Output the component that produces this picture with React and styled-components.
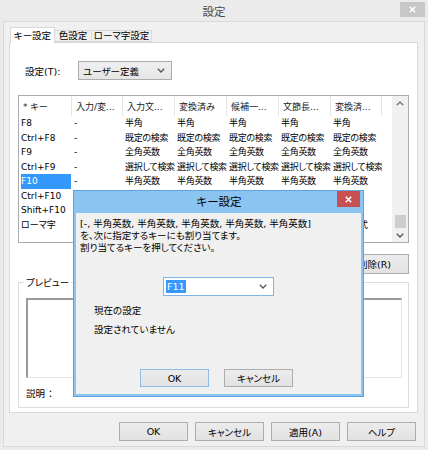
import React from 'react';
import styled, { createGlobalStyle } from 'styled-components';

const Global = createGlobalStyle`
  html, body { margin: 0; padding: 0; background: #ebebeb; }
  body {
    font-family: "DejaVu Sans", "Noto Sans CJK JP", sans-serif;
    font-size: 9.5px;
    font-feature-settings: "palt";
    color: #000;
  }
  * { box-sizing: border-box; }
`;

const Window = styled.div`
  position: relative;
  width: 428px;
  height: 450px;
  background: #ebebeb;
  display: flex;
  flex-direction: column;
  overflow: hidden;
`;

const TitleBar = styled.div`
  height: 21px;
  flex: none;
  display: flex;
  align-items: flex-start;
`;

const TitleText = styled.div`
  flex: 1;
  text-align: center;
  padding-left: ${p => p.$pad}px;
  line-height: ${p => p.$lh}px;
  font-size: 11.5px;
  color: ${p => p.$color};
`;

const CloseBtn = styled.div`
  width: ${p => p.$w}px;
  height: ${p => p.$h}px;
  margin: ${p => p.$m};
  background: ${p => p.$bg};
  display: flex;
  align-items: center;
  justify-content: center;
  flex: none;
`;

const Client = styled.div`
  flex: 1;
  margin: 0 3px 3px;
  border: 1px solid #d9d9d9;
  background: #f0f0f0;
  padding: 5px 6px 0 5px;
  display: flex;
  flex-direction: column;
`;

const TabStrip = styled.div`
  height: 15px;
  flex: none;
  display: flex;
  align-items: flex-end;
  padding-left: 1px;
`;

const Tab = styled.div`
  width: ${p => p.$w}px;
  height: ${p => (p.$active ? 16 : 12)}px;
  margin-bottom: ${p => (p.$active ? -1 : 0)}px;
  margin-left: ${p => (p.$first ? 0 : -1)}px;
  border: 1px solid #d9d9d9;
  border-bottom: ${p => (p.$active ? 'none' : '1px solid #d9d9d9')};
  background: ${p => (p.$active ? '#ffffff' : '#f0f0f0')};
  position: relative;
  z-index: ${p => (p.$active ? 2 : 1)};
  display: flex;
  align-items: center;
  justify-content: center;
  white-space: nowrap;
  line-height: 1;
`;

const Pane = styled.div`
  flex: 1;
  background: #ffffff;
  border: 1px solid #d9d9d9;
  display: flex;
  flex-direction: column;
`;

const SettingRow = styled.div`
  margin-top: 18px;
  padding-left: 15px;
  height: 19px;
  display: flex;
  align-items: center;
`;

const FieldLabel = styled.span`
  width: 53px;
  flex: none;
`;

const Combo = styled.div`
  width: ${p => p.$w}px;
  height: 19px;
  flex: none;
  display: flex;
  align-items: center;
  padding: 0 6px 0 ${p => p.$pl}px;
  border: 1px solid ${p => (p.$focus ? '#7eb4ea' : '#acacac')};
  background: ${p => (p.$focus ? '#ffffff' : 'linear-gradient(#f0f0f0, #e5e5e5)')};
`;

const ComboText = styled.span`
  flex: 1;
  white-space: nowrap;
`;

const Selected = styled.span`
  background: #3399ff;
  color: #ffffff;
  padding: 1px 1px;
`;

const ListView = styled.div`
  margin: 15px 8px 0;
  height: 148px;
  flex: none;
  border: 1px solid #a9abb0;
  background: #ffffff;
  display: flex;
  font-size: 9px;
`;

const ListMain = styled.div`
  flex: 1;
  min-width: 0;
  overflow: hidden;
  display: flex;
  flex-direction: column;
`;

const HeaderRow = styled.div`
  height: 20px;
  flex: none;
  display: flex;
`;

const HeaderCell = styled.div`
  width: ${p => p.$w}px;
  flex: none;
  border-right: 1px solid #e5e5e5;
  padding-left: 4px;
  display: flex;
  align-items: center;
  white-space: nowrap;
  overflow: hidden;
  color: #1a1a1a;
`;

const Row = styled.div`
  height: 14.5px;
  flex: none;
  display: flex;
`;

const Cell = styled.div`
  width: ${p => p.$w}px;
  flex: none;
  padding-left: 2px;
  line-height: 14.5px;
  letter-spacing: -0.3px;
  white-space: nowrap;
  overflow: hidden;
`;

const ItemLabel = styled.span`
  display: block;
  margin-right: 1px;
  letter-spacing: 0;
  background: ${p => (p.$selected ? '#3399ff' : 'transparent')};
  color: ${p => (p.$selected ? '#ffffff' : '#000000')};
`;

const ScrollBar = styled.div`
  width: 16px;
  flex: none;
  background: #f0f0f0;
  display: flex;
  flex-direction: column;
`;

const ScrollArrow = styled.div`
  height: 14px;
  flex: none;
  display: flex;
  align-items: center;
  justify-content: center;
`;

const ScrollTrack = styled.div`
  flex: 1;
  display: flex;
  flex-direction: column;
  justify-content: flex-end;
`;

const Thumb = styled.div`
  height: 13px;
  margin: 0 2px 0 3px;
  background: #cdcdcd;
`;

const ActionRow = styled.div`
  margin-top: 11px;
  padding-right: 8px;
  display: flex;
  justify-content: flex-end;
`;

const Button = styled.div`
  width: ${p => p.$w}px;
  height: ${p => p.$h}px;
  flex: none;
  border: 1px solid ${p => (p.$default ? '#8fbbe6' : '#adadad')};
  background: linear-gradient(#ececec, #e2e2e2);
  display: flex;
  align-items: center;
  justify-content: center;
  white-space: nowrap;
`;

const GroupBox = styled.div`
  margin: 8px 8px 0;
  height: 126px;
  flex: none;
  border: 1px solid #dcdcdc;
  padding: 0 6px 0 7px;
  display: flex;
  flex-direction: column;
`;

const Legend = styled.span`
  align-self: flex-start;
  margin: -7px 0 0 -2px;
  padding: 0 2px;
  line-height: 13px;
  height: 13px;
  background: #ffffff;
`;

const PreviewBox = styled.div`
  margin-top: 9px;
  height: 80px;
  flex: none;
  border-style: solid;
  border-width: 2px 1px 1px 2px;
  border-color: #9a9a9a #e3e3e3 #e3e3e3 #9a9a9a;
`;

const Note = styled.div`
  margin-top: 9px;
  line-height: 13px;
`;

const BottomBar = styled.div`
  margin: 9px 0 5px;
  padding-right: 2px;
  height: 19px;
  flex: none;
  display: flex;
  justify-content: flex-end;
  gap: 7px;
`;

/* ---- modal dialog ---- */
const Dialog = styled.div`
  position: absolute;
  left: 73px;
  top: 190px;
  width: 291px;
  height: 207px;
  background: #8cc4f1;
  border: 1px solid #5aa2e0;
  padding: 0 2px 2px;
  display: flex;
  flex-direction: column;
  z-index: 10;
`;

const DialogTitle = styled.div`
  height: 22px;
  flex: none;
  display: flex;
  align-items: flex-start;
`;

const DialogBody = styled.div`
  flex: 1;
  background: #f0f0f0;
  padding: 5px 4px 0;
  display: flex;
  flex-direction: column;
`;

const Message = styled.div`
  line-height: 12px;
  white-space: nowrap;
`;

const DialogCombo = styled.div`
  margin: 23px 0 0 83px;
  display: flex;
`;

const InfoText = styled.div`
  margin: ${p => p.$mt}px 0 0 14px;
  line-height: 12px;
`;

const DialogButtons = styled.div`
  margin-top: 33px;
  display: flex;
  justify-content: center;
  gap: 15px;
  padding-right: 4px;
`;

const Chevron = () => (
  <svg width="8" height="5" viewBox="0 0 8 5">
    <polyline points="0.8,0.8 4,4 7.2,0.8" fill="none" stroke="#555" strokeWidth="1.3" />
  </svg>
);

const ChevronUp = () => (
  <svg width="8" height="5" viewBox="0 0 8 5">
    <polyline points="0.8,4.2 4,1 7.2,4.2" fill="none" stroke="#606060" strokeWidth="1.2" />
  </svg>
);

const XMark = ({ size = 7 }) => (
  <svg width={size} height={size} viewBox="0 0 7 7">
    <path d="M0.8 0.8 L6.2 6.2 M6.2 0.8 L0.8 6.2" stroke="#fff" strokeWidth="1.6" />
  </svg>
);

const columns = [
  { title: '* キー', w: 53 },
  { title: '入力/変...', w: 51 },
  { title: '入力文...', w: 52 },
  { title: '変換済み', w: 52 },
  { title: '候補一...', w: 52 },
  { title: '文節長...', w: 52 },
  { title: '変換済...', w: 51 },
];

const five = v => [v, v, v, v, v];

const rows = [
  ['F8', '-', ...five('半角')],
  ['Ctrl+F8', '-', ...five('既定の検索')],
  ['F9', '-', ...five('全角英数')],
  ['Ctrl+F9', '-', ...five('選択して検索')],
  ['F10', '-', ...five('半角英数')],
  ['Ctrl+F10', '', '', '', '', '', ''],
  ['Shift+F10', '', '', '', '', '', ''],
  ['ローマ字', '', '', '', '', '', '入力方式'],
];

export default function App() {
  return (
    <Window>
      <Global />
      <TitleBar>
        <TitleText $pad={28} $lh={24} $color="#4a4a4a">設定</TitleText>
        <CloseBtn $w={25} $h={15} $m="2px 3px 0 0" $bg="#c7c7c7">
          <XMark />
        </CloseBtn>
      </TitleBar>
      <Client>
        <TabStrip>
          <Tab $active $first $w={45}>キー設定</Tab>
          <Tab $w={38}>色設定</Tab>
          <Tab $w={61}>ローマ字設定</Tab>
        </TabStrip>
        <Pane>
          <SettingRow>
            <FieldLabel>設定(T):</FieldLabel>
            <Combo $w={94} $pl={4}>
              <ComboText>ユーザー定義</ComboText>
              <Chevron />
            </Combo>
          </SettingRow>
          <ListView>
            <ListMain>
              <HeaderRow>
                {columns.map(c => (
                  <HeaderCell key={c.title} $w={c.w}>{c.title}</HeaderCell>
                ))}
              </HeaderRow>
              {rows.map((r, i) => (
                <Row key={i}>
                  {r.map((v, j) => (
                    <Cell key={j} $w={columns[j].w}>
                      {j === 0 ? <ItemLabel $selected={v === 'F10'}>{v}</ItemLabel> : v}
                    </Cell>
                  ))}
                </Row>
              ))}
            </ListMain>
            <ScrollBar>
              <ScrollArrow><ChevronUp /></ScrollArrow>
              <ScrollTrack>
                <Thumb />
              </ScrollTrack>
              <ScrollArrow><Chevron /></ScrollArrow>
            </ScrollBar>
          </ListView>
          <ActionRow>
            <Button $w={69} $h={20}>削除(R)</Button>
          </ActionRow>
          <GroupBox>
            <Legend>プレビュー</Legend>
            <PreviewBox />
            <Note>説明 ：</Note>
          </GroupBox>
        </Pane>
        <BottomBar>
          <Button $w={69} $h={19}>OK</Button>
          <Button $w={69} $h={19}>キャンセル</Button>
          <Button $w={69} $h={19}>適用(A)</Button>
          <Button $w={69} $h={19}>ヘルプ</Button>
        </BottomBar>
      </Client>

      <Dialog>
        <DialogTitle>
          <TitleText $pad={25} $lh={22} $color="#000">キー設定</TitleText>
          <CloseBtn $w={23} $h={16} $m="0 1px 0 0" $bg="#c75050">
            <XMark />
          </CloseBtn>
        </DialogTitle>
        <DialogBody>
          <Message>
            [-, 半角英数, 半角英数, 半角英数, 半角英数, 半角英数]
            <br />
            を、次に指定するキーにも割り当てます。
            <br />
            割り当てるキーを押してください。
          </Message>
          <DialogCombo>
            <Combo $w={111} $pl={2} $focus>
              <ComboText><Selected>F11</Selected></ComboText>
              <Chevron />
            </Combo>
          </DialogCombo>
          <InfoText $mt={9}>現在の設定</InfoText>
          <InfoText $mt={7}>設定されていません</InfoText>
          <DialogButtons>
            <Button $w={69} $h={18} $default>OK</Button>
            <Button $w={69} $h={18}>キャンセル</Button>
          </DialogButtons>
        </DialogBody>
      </Dialog>
    </Window>
  );
}
